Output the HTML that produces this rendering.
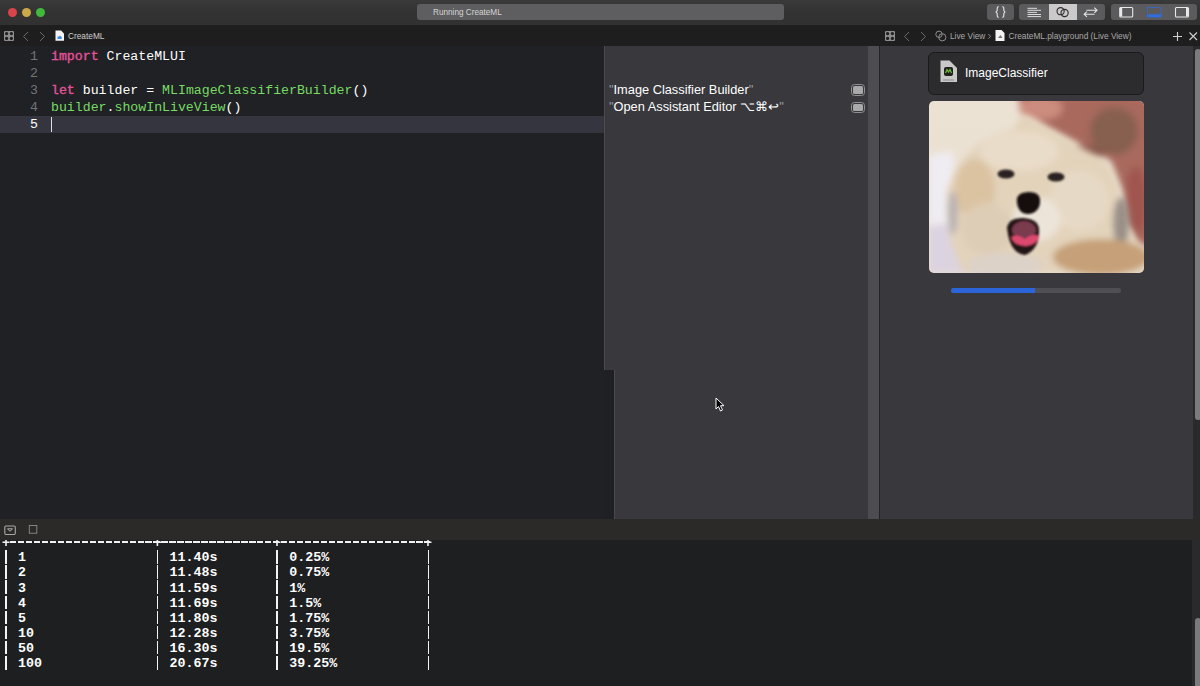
<!DOCTYPE html>
<html><head><meta charset="utf-8">
<style>
*{margin:0;padding:0;box-sizing:border-box}
html,body{width:1200px;height:686px;overflow:hidden;background:#1f2023;font-family:"Liberation Sans",sans-serif;position:relative}
.a{position:absolute}
#title{left:0;top:0;width:1200px;height:25px;background:linear-gradient(#3b3a3a,#343333 40%,#323131)}
.tl{top:8px;width:9px;height:9px;border-radius:50%}
#tabbar{left:0;top:25px;width:1200px;height:21px;background:#1f1e1e}
#editor{left:0;top:46px;width:604px;height:473px;background:#1f2124}
#curline{left:0;top:116px;width:604px;height:17px;background:#34353e}
.code{font-family:"Liberation Mono",monospace;font-size:13.23px;line-height:17px;white-space:pre;color:#fff}
.ln{left:0;width:38px;text-align:right;color:#747478}
.kw{color:#e5529a;-webkit-text-stroke:0.35px #e5529a}
.gr{color:#78db64}
#side{left:604px;top:46px;width:264px;height:324px;background:#38383d}
#side2{left:615px;top:370px;width:253px;height:149px;background:#38383d}
#div{left:868px;top:46px;width:11px;height:473px;background:#4d4d51}
#divl{left:879px;top:46px;width:1px;height:473px;background:#232325}
#live{left:880px;top:46px;width:313px;height:473px;background:#38383d}
#ltrack{left:1193px;top:46px;width:7px;height:473px;background:#2a2a2c}
#lthumb{left:1195px;top:49px;width:6px;height:371px;background:#7b7b7d;border-radius:3px}
#chead{left:0;top:519px;width:1200px;height:21px;background:#2b2a28}
#console{left:0;top:540px;width:1192px;height:146px;background:#1e1f21;overflow:hidden}
#ctrack{left:1192px;top:540px;width:8px;height:146px;background:#2a2a2c}
#cthumb{left:1195px;top:618px;width:6px;height:70px;background:#7b7b7d;border-radius:3px}
.ctext{font-family:"Liberation Mono",monospace;font-weight:bold;font-size:13.3px;line-height:15.1px;white-space:pre;color:#fff}
.tb{font-size:8.2px;line-height:10px;color:#bdbdbd;white-space:nowrap}
.btn{top:4px;height:16px;background:#5b5a5c;border-radius:3px}
.rs{font-size:12.8px;line-height:17px;color:#fff;white-space:nowrap}
.ql{left:851px;width:14px;height:11.7px;border:1px solid #909092;border-radius:3.5px;background:#38383d}
.ql::after{content:"";position:absolute;left:1px;top:1px;right:1px;bottom:1px;background:#a9a9ab;border-radius:1.5px}
</style></head><body>
<!-- title bar -->
<div id="title" class="a"></div>
<div class="a tl" style="left:8px;background:#d9444b"></div>
<div class="a tl" style="left:22px;background:#c9a94a"></div>
<div class="a tl" style="left:36px;background:#42b83a"></div>
<div class="a" style="left:417px;top:4px;width:367px;height:16px;background:#5e5d5f;border-radius:3px"></div>
<div class="a" style="left:433px;top:6px;font-size:8.2px;line-height:14px;color:#d6d6d6">Running CreateML</div>
<div class="a btn" style="left:987px;width:27px"></div>
<svg class="a" style="left:987px;top:4px" width="27" height="16" viewBox="0 0 27 16"><path d="M11.8 2.8H11.3Q10.2 2.8 10.2 4V6.5L9 8L10.2 9.5V12Q10.2 13.2 11.3 13.2H11.8M15.2 2.8H15.7Q16.8 2.8 16.8 4V6.5L18 8L16.8 9.5V12Q16.8 13.2 15.7 13.2H15.2" fill="none" stroke="#e6e6e6" stroke-width="1.1"/></svg>
<div class="a btn" style="left:1019px;width:86px"></div>
<div class="a" style="left:1049px;top:4px;width:28px;height:16px;background:#cbc9c9"></div>
<svg class="a" style="left:1019px;top:4px" width="86" height="16" viewBox="0 0 86 16"><g stroke="#dcdcdc" stroke-width="1"><path d="M8.5 4.3H18M8.5 6.3H22M8.5 8.4H18M8.5 10.5H22M8.5 12.6H22"/></g>
<g fill="none" stroke="#2c2c2c" stroke-width="1.1"><circle cx="41.6" cy="7.2" r="3.6"/><circle cx="45.6" cy="9" r="3.6"/></g>
<g fill="none" stroke="#e6e6e6" stroke-width="1.1"><path d="M67.5 6.2H78M75.3 3.6L78 6.2L75.3 8.8M75.5 10.3H65.2M67.9 7.7L65.2 10.3L67.9 12.9"/></g></svg>
<div class="a btn" style="left:1111px;width:86px"></div>
<svg class="a" style="left:1111px;top:4px" width="86" height="16" viewBox="0 0 86 16">
<rect x="8.7" y="3.5" width="13" height="9.5" rx="1" fill="none" stroke="#e8e8e8" stroke-width="1.1"/><rect x="9" y="4" width="2.2" height="8.5" fill="#e8e8e8"/>
<rect x="36.5" y="3.5" width="13.5" height="9.5" fill="none" stroke="#2f6de0" stroke-width="1.1" stroke-dasharray="1.5 0.8"/><rect x="36.5" y="10.3" width="13.5" height="2.8" fill="#2f6de0"/>
<rect x="64.5" y="3.5" width="13" height="9.5" rx="1" fill="none" stroke="#e8e8e8" stroke-width="1.1"/><rect x="75" y="4" width="2.2" height="8.5" fill="#e8e8e8"/>
</svg>

<!-- tab bar -->
<div id="tabbar" class="a"></div>
<svg class="a" style="left:0;top:25px" width="1200" height="21" viewBox="0 0 1200 21">
<g id="grid"><rect x="4" y="6" width="10" height="10" rx="1" fill="#8c8c8c"/><g fill="#1f1e1e"><circle cx="6.6" cy="8.6" r="1.6"/><circle cx="11.4" cy="8.6" r="1.6"/><circle cx="6.6" cy="13.4" r="1.6"/><circle cx="11.4" cy="13.4" r="1.6"/></g></g>
<path d="M28 7L23.5 11.5L28 16" fill="none" stroke="#6a6a6a" stroke-width="1"/>
<path d="M40 7L44.5 11.5L40 16" fill="none" stroke="#6a6a6a" stroke-width="1"/>
<path d="M55.5 5.5H61L64 8.5V15.7H55.5Z" fill="#f4f4f4"/><path d="M58 13.5L60 10.5L62 13.5Z" fill="#2a7ad8"/><rect x="57.5" y="11.5" width="4" height="2.5" fill="#3b8ee8"/>
<use href="#grid" x="881"/>
<path d="M909 7L904.5 11.5L909 16" fill="none" stroke="#6a6a6a" stroke-width="1"/>
<path d="M921 7L925.5 11.5L921 16" fill="none" stroke="#6a6a6a" stroke-width="1"/>
<g fill="none" stroke="#8c8c8c" stroke-width="1"><circle cx="939" cy="9.3" r="3.2"/><circle cx="942.3" cy="12.3" r="3.6"/></g>
<path d="M988.3 9L990.6 11.3L988.3 13.6" fill="none" stroke="#9a9a9a" stroke-width="0.9"/>
<path d="M995.5 5H1001.5L1004.5 8V16H995.5Z" fill="#f4f4f4"/><path d="M998 13L1000.5 10L1002.5 13Z" fill="#777"/>
<path d="M1173 11.5H1182M1177.5 7V16" stroke="#cfcfcf" stroke-width="1.1"/>
<path d="M1189.5 7.5L1197 15M1197 7.5L1189.5 15" stroke="#cfcfcf" stroke-width="1.1"/>
</svg>
<div class="a tb" style="left:68px;top:31px;font-size:8.3px;color:#cdcdcd">CreateML</div>
<div class="a tb" style="left:950px;top:31px;font-size:8.3px;color:#a9a9a9">Live View</div>
<div class="a tb" style="left:1008.5px;top:31px;font-size:8.3px;color:#a9a9a9">CreateML.playground (Live View)</div>

<!-- editor -->
<div id="editor" class="a"></div>
<div id="curline" class="a"></div>
<div class="a code ln" style="top:48px">1
2
3
4
<span style="color:#fff">5</span></div>
<div class="a code" style="left:51px;top:48px"><span class="kw">import</span> CreateMLUI

<span class="kw">let</span> builder = <span class="gr">MLImageClassifierBuilder</span>()
<span class="gr">builder</span>.<span class="gr">showInLiveView</span>()
</div>
<div class="a" style="left:51px;top:117px;width:1px;height:15px;background:#e0e0e0"></div>

<!-- results sidebar -->
<div id="side" class="a"></div>
<div id="side2" class="a"></div>
<div class="a" style="left:604px;top:46px;width:1px;height:324px;background:#4a4a50"></div>
<div class="a" style="left:614px;top:370px;width:1px;height:149px;background:#4a4a50"></div>
<div class="a rs" style="left:609px;top:81px"><span style="color:#9c9ca2">"</span>Image Classifier Builder<span style="color:#9c9ca2">"</span></div>
<div class="a rs" style="left:609px;top:98px"><span style="color:#9c9ca2">"</span>Open Assistant Editor ⌥⌘↩<span style="color:#9c9ca2">"</span></div>
<div class="a ql" style="top:84.3px"></div>
<div class="a ql" style="top:101.5px"></div>

<div id="div" class="a"></div>
<div id="divl" class="a"></div>

<!-- live view -->
<div id="live" class="a"></div>
<div id="ltrack" class="a"></div>
<div id="lthumb" class="a"></div>
<div class="a" style="left:928px;top:52px;width:216px;height:43px;background:#2c2c2f;border:1px solid #1a1a1c;border-radius:6px"></div>
<svg class="a" style="left:940px;top:60px" width="18" height="23" viewBox="0 0 18 23"><path d="M0.5 0.5H9.5L17 8V22H0.5Z" fill="#c9c9c9"/><rect x="4" y="7" width="9" height="9" rx="2" fill="#1f201c"/><path d="M5.5 13L7 9.5L8.5 12L10 9.5L11.5 13" fill="none" stroke="#6fc23a" stroke-width="1.2"/><rect x="3" y="19.5" width="11" height="1" fill="#8a8a8a"/></svg>
<div class="a" style="left:965px;top:65px;font-size:12px;line-height:16px;color:#fff">ImageClassifier</div>
<div class="a" style="left:929px;top:101px;width:215px;height:172px;border-radius:5px;overflow:hidden">
<svg width="215" height="172" viewBox="0 0 215 172">
<defs>
<filter id="b1" x="-30%" y="-30%" width="160%" height="160%"><feGaussianBlur stdDeviation="3.5"/></filter>
<filter id="b2" x="-30%" y="-30%" width="160%" height="160%"><feGaussianBlur stdDeviation="3"/></filter>
<filter id="b3" x="-30%" y="-30%" width="160%" height="160%"><feGaussianBlur stdDeviation="0.9"/></filter>
<linearGradient id="bg" x1="0" y1="0" x2="0" y2="1"><stop offset="0" stop-color="#ece2d3"/><stop offset="1" stop-color="#e8dfd2"/></linearGradient>
</defs>
<rect width="215" height="172" fill="url(#bg)"/>
<g filter="url(#b1)">
<path d="M0 55 L24 50 L34 172 L0 172Z" fill="#efecf2"/>
<path d="M0 125 L35 120 L60 172 L0 172Z" fill="#dcd3e0"/>
<path d="M86 -10 L230 -10 L230 150 L205 140 L196 95 L182 60 L152 44 L115 24 L96 14Z" fill="#a9695d"/>
<ellipse cx="112" cy="7" rx="22" ry="12" fill="#cc8c7e"/>
<ellipse cx="185" cy="30" rx="24" ry="24" fill="#876150"/>
<ellipse cx="160" cy="52" rx="16" ry="8" fill="#8a5a50"/>
<ellipse cx="207" cy="100" rx="12" ry="34" fill="#a05650"/>
</g>
<g filter="url(#b2)">
<path d="M18 92 Q24 62 56 38 Q72 30 84 28 Q92 12 100 16 Q114 26 130 34 Q154 48 175 58 Q188 75 194 110 Q206 140 215 150 L215 172 L34 172 Q14 130 18 92Z" fill="#e3d3bb"/>
<ellipse cx="90" cy="50" rx="40" ry="20" fill="#e9dcc8"/>
<ellipse cx="46" cy="88" rx="20" ry="30" fill="#dbc3a2"/>
<ellipse cx="150" cy="100" rx="30" ry="30" fill="#e6d9c5"/>
<ellipse cx="24" cy="112" rx="5" ry="22" fill="#b9b3b2"/>
<ellipse cx="192" cy="122" rx="8" ry="26" fill="#9a9088"/>
<ellipse cx="58" cy="128" rx="26" ry="26" fill="#decdb6"/>
<ellipse cx="108" cy="118" rx="24" ry="22" fill="#ece4d9"/>
<ellipse cx="172" cy="156" rx="48" ry="18" fill="#c6a078"/>
<ellipse cx="76" cy="164" rx="38" ry="12" fill="#ddd2c8"/>
</g>
<g filter="url(#b3)">
<ellipse cx="77" cy="73" rx="8.5" ry="4.5" fill="#2a2220"/>
<ellipse cx="127" cy="76" rx="8.5" ry="4.5" fill="#2a2220"/>
<path d="M88 97 Q90 91 100 91 Q110 91 111 98 Q112 108 104 112 Q99 114 94 112 Q87 108 88 97Z" fill="#121111"/>
<path d="M78 126 Q80 117 94 117 Q109 118 110 128 Q111 148 96 154 Q80 152 78 126Z" fill="#221313"/>
<ellipse cx="95" cy="129" rx="12" ry="9" fill="#7a3a50"/>
<path d="M82 136 Q89 132 96 138 Q103 132 110 135 Q109 143 97 145 Q85 145 82 136Z" fill="#dd4a6e"/>
</g>
</svg></div>
<div class="a" style="left:951px;top:288px;width:170px;height:5px;background:#505054;border-radius:3px"></div>
<div class="a" style="left:951px;top:288px;width:84px;height:5px;background:#2c64da;border-radius:3px 0 0 3px"></div>

<!-- cursor -->
<svg class="a" style="left:715px;top:397px" width="12" height="16" viewBox="0 0 12 16"><path d="M1 1 L1 12 L3.5 9.5 L5.5 14 L7.5 13 L5.5 8.7 L9 8.7 Z" fill="#000" stroke="#fff" stroke-width="1"/></svg>

<!-- console -->
<div id="chead" class="a"></div>
<div id="console" class="a">
<div class="a ctext" style="left:2px;top:10.4px">  1                  11.40s         0.25%             
  2                  11.48s         0.75%             
  3                  11.59s         1%                
  4                  11.69s         1.5%              
  5                  11.80s         1.75%             
  10                 12.28s         3.75%             
  50                 16.30s         19.5%             
  100                20.67s         39.25%            </div>
<div class="a" style="left:5.2px;top:10.30px;width:1.8px;height:13.6px;background:#f4f4f4"></div>
<div class="a" style="left:156.6px;top:10.30px;width:1.8px;height:13.6px;background:#f4f4f4"></div>
<div class="a" style="left:276.2px;top:10.30px;width:1.8px;height:13.6px;background:#f4f4f4"></div>
<div class="a" style="left:427.5px;top:10.30px;width:1.8px;height:13.6px;background:#f4f4f4"></div>
<div class="a" style="left:5.2px;top:25.39px;width:1.8px;height:13.6px;background:#f4f4f4"></div>
<div class="a" style="left:156.6px;top:25.39px;width:1.8px;height:13.6px;background:#f4f4f4"></div>
<div class="a" style="left:276.2px;top:25.39px;width:1.8px;height:13.6px;background:#f4f4f4"></div>
<div class="a" style="left:427.5px;top:25.39px;width:1.8px;height:13.6px;background:#f4f4f4"></div>
<div class="a" style="left:5.2px;top:40.48px;width:1.8px;height:13.6px;background:#f4f4f4"></div>
<div class="a" style="left:156.6px;top:40.48px;width:1.8px;height:13.6px;background:#f4f4f4"></div>
<div class="a" style="left:276.2px;top:40.48px;width:1.8px;height:13.6px;background:#f4f4f4"></div>
<div class="a" style="left:427.5px;top:40.48px;width:1.8px;height:13.6px;background:#f4f4f4"></div>
<div class="a" style="left:5.2px;top:55.57px;width:1.8px;height:13.6px;background:#f4f4f4"></div>
<div class="a" style="left:156.6px;top:55.57px;width:1.8px;height:13.6px;background:#f4f4f4"></div>
<div class="a" style="left:276.2px;top:55.57px;width:1.8px;height:13.6px;background:#f4f4f4"></div>
<div class="a" style="left:427.5px;top:55.57px;width:1.8px;height:13.6px;background:#f4f4f4"></div>
<div class="a" style="left:5.2px;top:70.66px;width:1.8px;height:13.6px;background:#f4f4f4"></div>
<div class="a" style="left:156.6px;top:70.66px;width:1.8px;height:13.6px;background:#f4f4f4"></div>
<div class="a" style="left:276.2px;top:70.66px;width:1.8px;height:13.6px;background:#f4f4f4"></div>
<div class="a" style="left:427.5px;top:70.66px;width:1.8px;height:13.6px;background:#f4f4f4"></div>
<div class="a" style="left:5.2px;top:85.75px;width:1.8px;height:13.6px;background:#f4f4f4"></div>
<div class="a" style="left:156.6px;top:85.75px;width:1.8px;height:13.6px;background:#f4f4f4"></div>
<div class="a" style="left:276.2px;top:85.75px;width:1.8px;height:13.6px;background:#f4f4f4"></div>
<div class="a" style="left:427.5px;top:85.75px;width:1.8px;height:13.6px;background:#f4f4f4"></div>
<div class="a" style="left:5.2px;top:100.84px;width:1.8px;height:13.6px;background:#f4f4f4"></div>
<div class="a" style="left:156.6px;top:100.84px;width:1.8px;height:13.6px;background:#f4f4f4"></div>
<div class="a" style="left:276.2px;top:100.84px;width:1.8px;height:13.6px;background:#f4f4f4"></div>
<div class="a" style="left:427.5px;top:100.84px;width:1.8px;height:13.6px;background:#f4f4f4"></div>
<div class="a" style="left:5.2px;top:115.93px;width:1.8px;height:13.6px;background:#f4f4f4"></div>
<div class="a" style="left:156.6px;top:115.93px;width:1.8px;height:13.6px;background:#f4f4f4"></div>
<div class="a" style="left:276.2px;top:115.93px;width:1.8px;height:13.6px;background:#f4f4f4"></div>
<div class="a" style="left:427.5px;top:115.93px;width:1.8px;height:13.6px;background:#f4f4f4"></div>
</div>
<div class="a" style="left:10px;top:541.2px;width:420px;height:2px;background:repeating-linear-gradient(90deg,#f2f2f2 0 6.4px,transparent 6.4px 7.97px)"></div>
<svg class="a" style="left:0;top:538px" width="440" height="10" viewBox="0 0 440 10"><g stroke="#f2f2f2" stroke-width="1.6"><path d="M2.5 4.3H9.5M6 2V8"/><path d="M153.8 4.3H161M157.4 2V8"/><path d="M273.5 4.3H280.5M277 2V8"/><path d="M424.5 4.3H431.5M428 2V8"/></g></svg>
<svg class="a" style="left:0;top:519px" width="60" height="21" viewBox="0 0 60 21"><rect x="4.8" y="7" width="10.5" height="8.5" rx="1.2" fill="none" stroke="#a9a9a9" stroke-width="1.1"/><path d="M7.5 9.8H12.5L10 12.3Z" fill="none" stroke="#c0c0c0" stroke-width="0.9"/><rect x="29.3" y="6.5" width="7.5" height="7.7" fill="none" stroke="#8c8c8c" stroke-width="0.9"/></svg>
<div id="ctrack" class="a"></div>
<div id="cthumb" class="a"></div>
</body></html>
